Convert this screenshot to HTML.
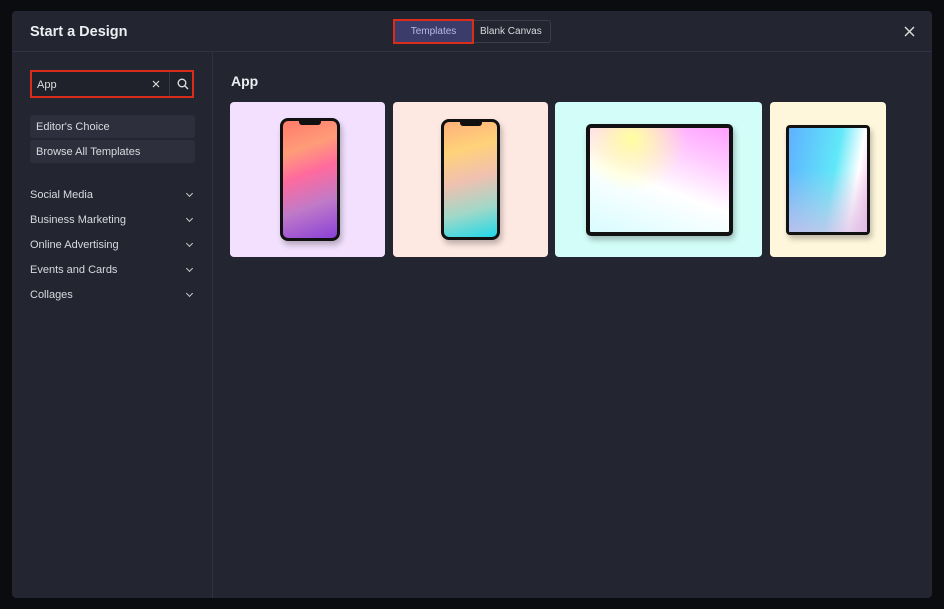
<!DOCTYPE html>
<html><head><meta charset="utf-8">
<style>
*{box-sizing:border-box;margin:0;padding:0}
body{width:944px;height:609px;background:#0b0c0f;font-family:"Liberation Sans",sans-serif;position:relative;overflow:hidden;color:#e4e5ea}
.modal{position:absolute;left:12px;top:11px;width:920px;height:587px;background:#232530;border-radius:4px}
.hdr{position:absolute;left:0;top:0;width:920px;height:41px;border-bottom:1px solid #2f3240}
.title{position:absolute;left:18px;top:13px;font-size:14.5px;font-weight:bold;color:#eceef2}
.tabs{position:absolute;left:382px;top:9px;height:23px;border:1px solid #3a3d4c;border-radius:3px;display:flex}
.tab{font-size:10px;line-height:21px;padding:0 8px;color:#d8dae0}
.tab.on{background:#3c3c6a;color:#b8b9e8;outline:2px solid #d92c1a;width:77px;text-align:center}
.close{position:absolute;right:17px;top:15px}
.side{position:absolute;left:0;top:41px;width:201px;height:546px;border-right:1px solid #30333f}
.search{position:absolute;left:18px;top:18px;width:164px;height:28px;border:2px solid #d92c1a;background:#1f212b}
.search span{position:absolute;left:5px;top:7px;font-size:11px;color:#ddd}
.search .sep{position:absolute;left:137px;top:0;width:1px;height:24px;background:#353846}
.btn{position:absolute;left:18px;width:165px;height:23px;background:#2d303c;border-radius:3px;font-size:11px;line-height:24px;padding-left:6px;color:#d8dae0}
.cat{position:absolute;left:18px;width:160px;font-size:11px;color:#d8dae0}
.cat i{position:absolute;right:-2px;top:2px;width:5px;height:5px;border-right:1.3px solid #ccc;border-bottom:1.3px solid #ccc;transform:rotate(45deg)}
.h2{position:absolute;left:219px;top:62px;font-size:14px;font-weight:bold;color:#eceef2}
.card{position:absolute;top:91px;height:155px;border-radius:4px}
.dev{position:absolute;border:3px solid #111;background:#fff;box-shadow:2px 4px 6px rgba(0,0,0,.25)}
.notch{position:absolute;left:50%;top:-1px;width:22px;height:5px;margin-left:-11px;background:#111;border-radius:0 0 3px 3px}
</style></head><body>
<div class="modal">
 <div class="hdr">
  <div class="title">Start a Design</div>
  <div class="tabs"><div class="tab on">Templates</div><div class="tab">Blank Canvas</div></div>
  <svg class="close" width="11" height="11" viewBox="0 0 11 11"><path d="M1 1l9 9M10 1l-9 9" stroke="#e0e0e0" stroke-width="1.4"/></svg>
 </div>
 <div class="side">
  <div class="search"><span>App</span><div class="sep"></div>
   <svg style="position:absolute;left:120px;top:8px" width="8" height="8" viewBox="0 0 8 8"><path d="M1 1l6 6M7 1l-6 6" stroke="#ddd" stroke-width="1.2"/></svg>
   <svg style="position:absolute;left:145px;top:6px" width="12" height="12" viewBox="0 0 12 12"><circle cx="5" cy="5" r="3.8" fill="none" stroke="#ddd" stroke-width="1.4"/><path d="M8 8l3 3" stroke="#ddd" stroke-width="1.4"/></svg></div>
  <div class="btn" style="top:63px">Editor's Choice</div>
  <div class="btn" style="top:88px">Browse All Templates</div>
  <div class="cat" style="top:137px">Social Media<i></i></div>
  <div class="cat" style="top:162px">Business Marketing<i></i></div>
  <div class="cat" style="top:187px">Online Advertising<i></i></div>
  <div class="cat" style="top:212px">Events and Cards<i></i></div>
  <div class="cat" style="top:237px">Collages<i></i></div>
 </div>
 <div class="h2">App</div>
 <div class="card" style="left:218px;width:155px;background:#f2e0fe">
  <div class="dev" style="left:50px;top:16px;width:60px;height:123px;border-radius:8px;background:linear-gradient(160deg,#ff7a6a 0%,#ff9c78 25%,#ff6a9e 45%,#c07ac8 70%,#8a40d8 100%)"><div class="notch"></div></div>
 </div>
 <div class="card" style="left:381px;width:155px;background:#fde8e2">
  <div class="dev" style="left:48px;top:17px;width:59px;height:121px;border-radius:8px;background:linear-gradient(165deg,#ffb07a 0%,#ffd27a 25%,#f0c0b0 50%,#a0d8c8 75%,#20d8e8 100%)"><div class="notch"></div></div>
 </div>
 <div class="card" style="left:543px;width:207px;background:#d2fdf8">
  <div class="dev" style="left:31px;top:22px;width:147px;height:112px;border-radius:5px;border-width:4px;background:radial-gradient(ellipse at 30% 10%,#ffffa0 0%,rgba(255,255,255,0) 40%),linear-gradient(200deg,#ffa0ff 0%,#ffc8ff 25%,#ffffff 55%,#d8fcff 100%)"></div>
 </div>
 <div class="card" style="left:758px;width:116px;background:#fff7dc">
  <div class="dev" style="left:16px;top:23px;width:84px;height:110px;border-radius:4px;background:linear-gradient(100deg,#60b0ff 0%,#60e8f8 55%,#ffffff 80%,#f0b0e0 100%)"><div style="position:absolute;inset:0;background:linear-gradient(180deg,rgba(255,255,255,0) 40%,rgba(220,190,230,.7) 100%)"></div></div>
 </div>
</div>
</body></html>
